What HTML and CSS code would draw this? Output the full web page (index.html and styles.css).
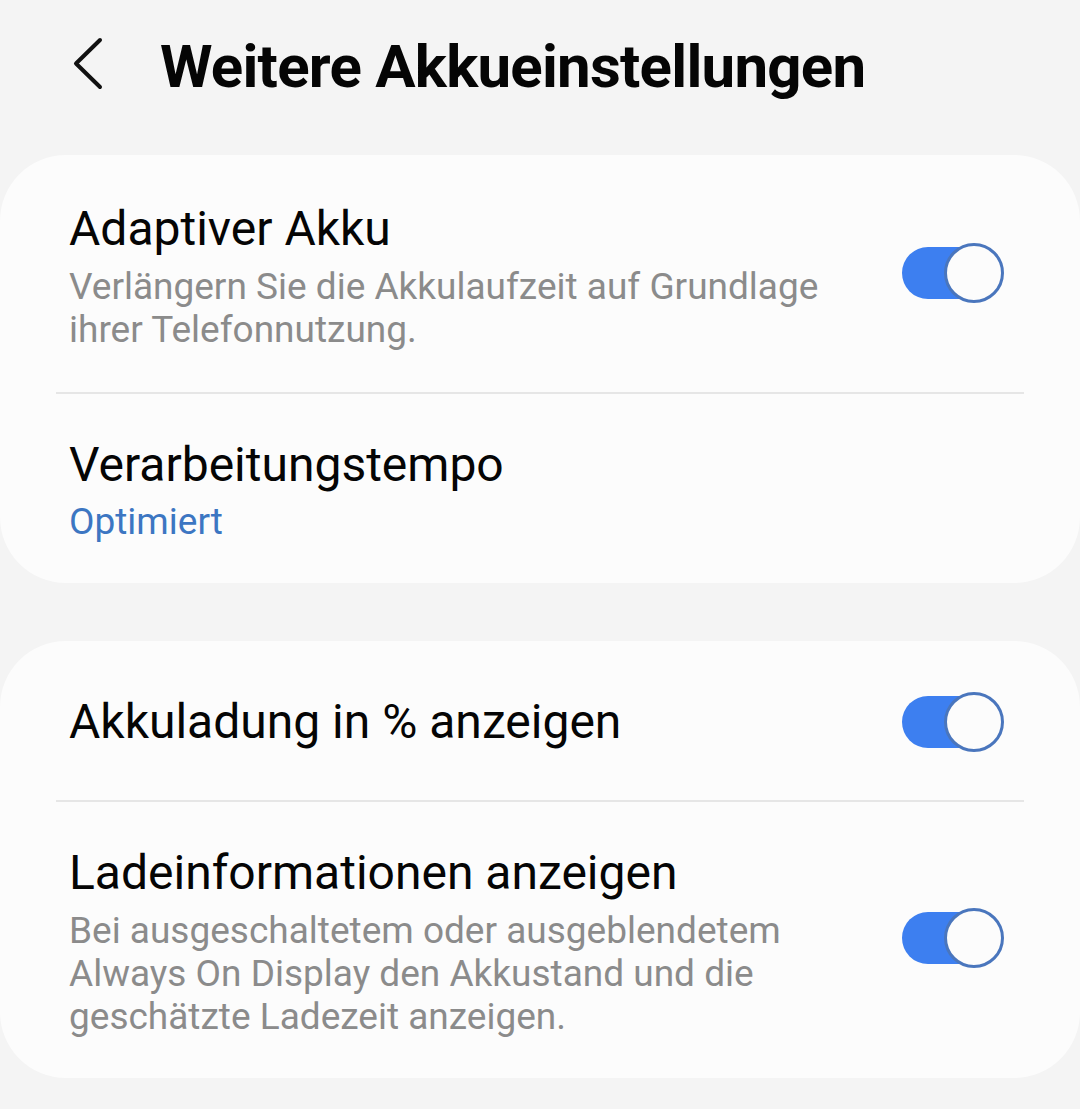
FILE: index.html
```html
<!DOCTYPE html>
<html lang="de">
<head>
<meta charset="utf-8">
<title>Weitere Akkueinstellungen</title>
<link rel="stylesheet" href="styles.css">
</head>
<body>
<header class="header">
  <svg class="back" width="32" height="56" viewBox="0 0 32 56" aria-hidden="true">
    <path d="M28 4 L4 27.5 L28 51" fill="none" stroke="#111" stroke-width="4" stroke-linecap="round" stroke-linejoin="round"/>
  </svg>
  <h1 class="title">Weitere Akkueinstellungen</h1>
</header>
<main class="content">
  <section class="card">
    <div class="row row-first">
      <div class="text">
        <div class="label">Adaptiver Akku</div>
        <div class="sub">Verlängern Sie die Akkulaufzeit auf Grundlage<br>ihrer Telefonnutzung.</div>
      </div>
      <div class="switch switch-up"><span class="track"></span><span class="thumb"></span></div>
    </div>
    <div class="divider"></div>
    <div class="row">
      <div class="text">
        <div class="label">Verarbeitungstempo</div>
        <div class="sub value">Optimiert</div>
      </div>
    </div>
  </section>
  <section class="card card-second">
    <div class="row row-single">
      <div class="text">
        <div class="label">Akkuladung in % anzeigen</div>
      </div>
      <div class="switch"><span class="track"></span><span class="thumb"></span></div>
    </div>
    <div class="divider"></div>
    <div class="row">
      <div class="text">
        <div class="label">Ladeinformationen anzeigen</div>
        <div class="sub">Bei ausgeschaltetem oder ausgeblendetem<br>Always On Display den Akkustand und die<br>geschätzte Ladezeit anzeigen.</div>
      </div>
      <div class="switch switch-up"><span class="track"></span><span class="thumb"></span></div>
    </div>
  </section>
</main>
</body>
</html>
```
FILE: styles.css
```css
html, body {
  margin: 0;
  padding: 0;
}
body {
  width: 1080px;
  height: 1109px;
  background: #f4f4f4;
  font-family: Roboto, "Noto Sans", "Liberation Sans", sans-serif;
  color: #0a0a0a;
  overflow: hidden;
}
.header {
  height: 155px;
  box-sizing: border-box;
  padding: 32px 0 0 72px;
  display: flex;
  align-items: flex-start;
}
.back {
  margin-top: 4px;
  flex: none;
}
.title {
  margin: 0 0 0 56px;
  font-size: 60px;
  line-height: 70px;
  font-weight: 700;
  letter-spacing: -0.75px;
  color: #050505;
}
.content {
  display: flex;
  flex-direction: column;
  gap: 58px;
}
.card {
  background: #fcfcfc;
  border-radius: 66px;
  padding: 4px 0 0;
}
.row {
  display: flex;
  align-items: center;
  justify-content: space-between;
  padding: 43px 76px 40px 69px;
}
.row-first {
  padding-top: 42px;
  padding-bottom: 41px;
}
.row-single {
  padding-top: 46.5px;
  padding-bottom: 48.5px;
}
.text {
  display: flex;
  flex-direction: column;
  gap: 7.5px;
}
.label {
  font-size: 48px;
  line-height: 56px;
  color: #050505;
}
.sub {
  font-size: 37px;
  line-height: 43px;
  color: #8b8b8b;
}
.value {
  color: #3c76c2;
}
.divider {
  height: 2px;
  margin: 0 56px;
  background: #e6e6e6;
}
.switch {
  position: relative;
  width: 102px;
  height: 60px;
  flex: none;
}
.switch-up {
  margin-top: -6px;
}
.track {
  position: absolute;
  left: 0;
  top: 4px;
  width: 90px;
  height: 52px;
  border-radius: 26px;
  background: #3d7ff0;
}
.thumb {
  position: absolute;
  right: 0;
  top: 0;
  width: 60px;
  height: 60px;
  box-sizing: border-box;
  border-radius: 50%;
  border: 3px solid #4a76bd;
  background: #fcfcfc;
}
```
